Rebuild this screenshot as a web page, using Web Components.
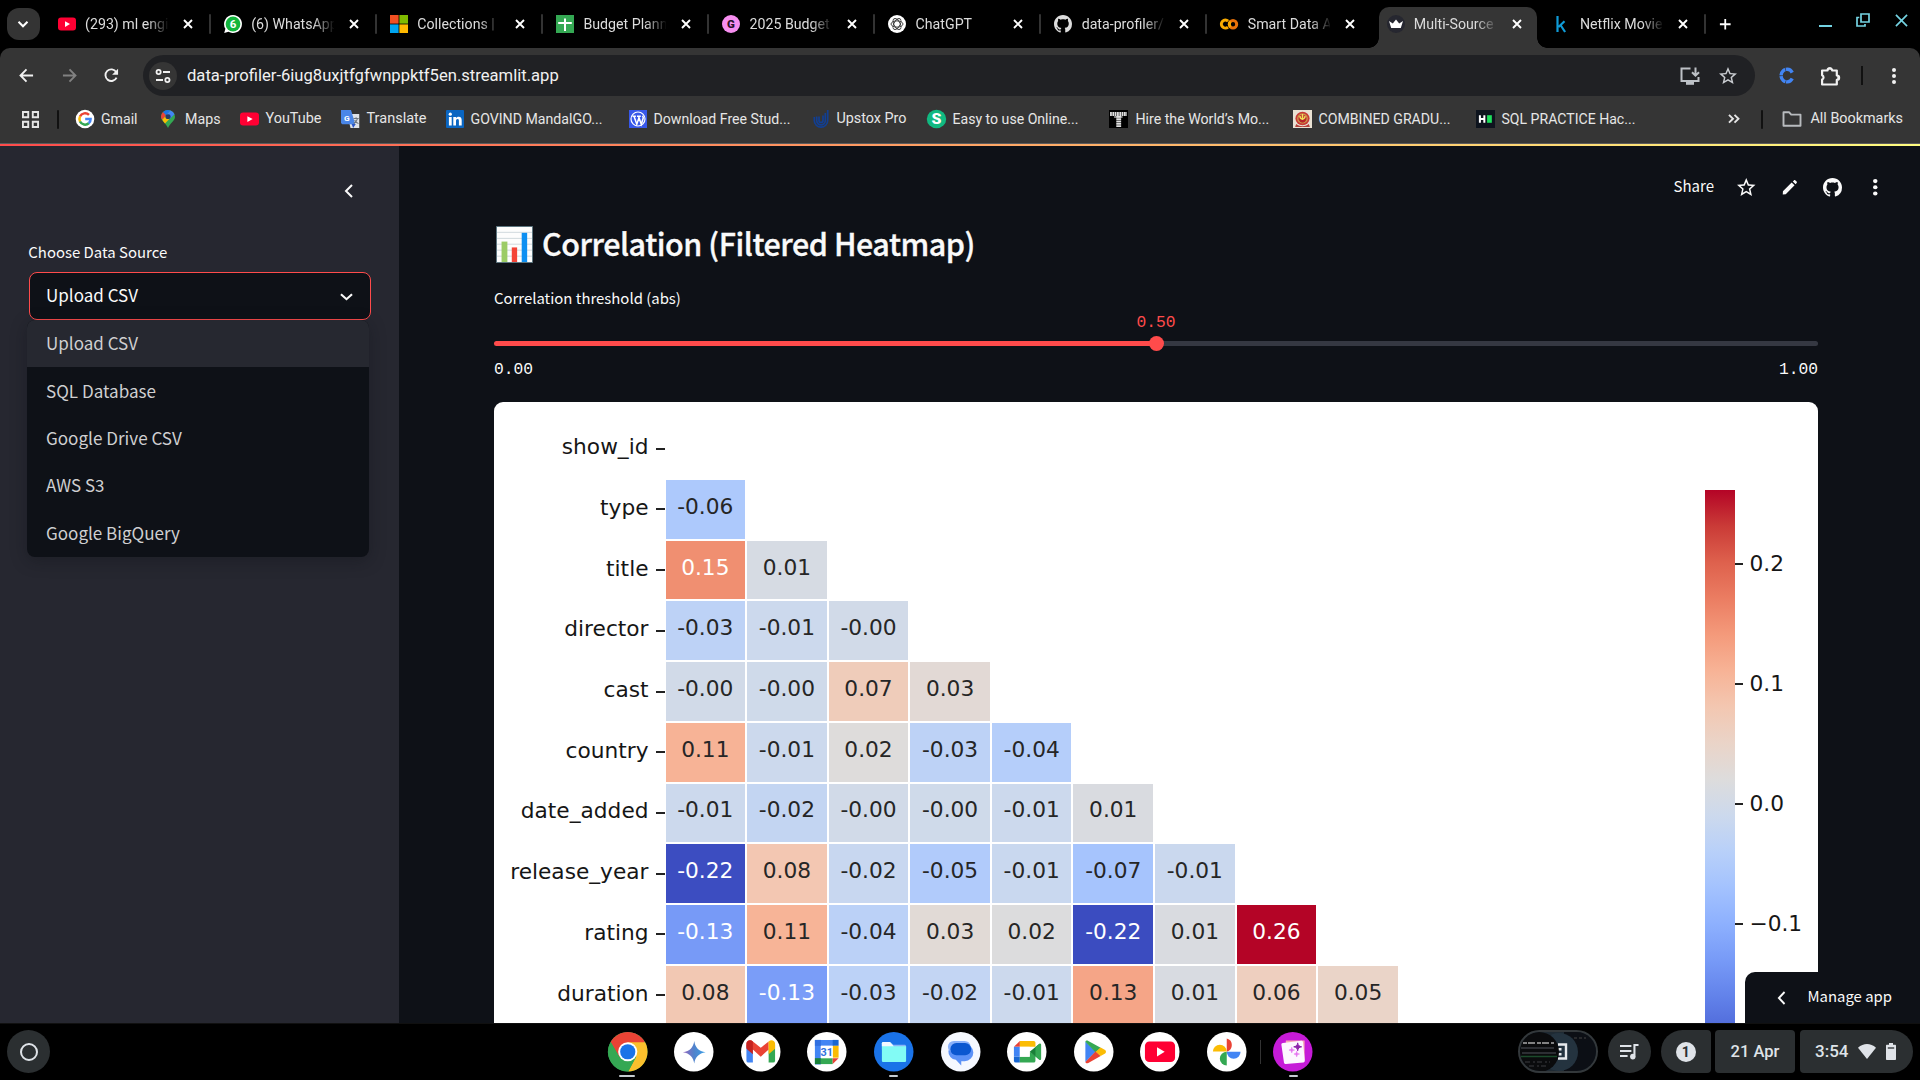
<!DOCTYPE html>
<html lang="en">
<head>
<meta charset="utf-8">
<title>Multi-Source Data Profiler</title>
<style>
html,body{margin:0;padding:0;background:#000;overflow:hidden}
body{width:1920px;height:1080px;font-family:Roboto,"Liberation Sans",sans-serif}
</style>
</head>
<body>
<desktop-screen></desktop-screen>
<script>
const SRC = '"Noto Sans CJK SC","Noto Sans",sans-serif';

/* Text that grows or shrinks its font so that it fills the width given in w. */
class FitText extends HTMLElement {
  connectedCallback() {
    if (!this.shadowRoot) {
      this.attachShadow({mode: 'open'}).innerHTML =
        '<style>:host{display:inline-block;white-space:nowrap;flex:none}</style><slot></slot>';
    }
    const w = parseFloat(this.getAttribute('w'));
    this.style.fontSize = '40px';
    const natural = this.getBoundingClientRect().width;
    if (natural > 0) this.style.fontSize = (40 * w / natural).toFixed(3) + 'px';
  }
}
customElements.define('fit-text', FitText);

const YT = '<rect x="0" y="2.6" width="18" height="13" rx="3" fill="#ff0033"/><path d="M7 6.2l5 2.9-5 2.9z" fill="#fff"/>';
const GH = '<path fill="currentColor" d="M8 0C3.58 0 0 3.58 0 8c0 3.54 2.29 6.53 5.47 7.59.4.07.55-.17.55-.38 0-.19-.01-.82-.01-1.49-2.01.37-2.53-.49-2.69-.94-.09-.23-.48-.94-.82-1.13-.28-.15-.68-.52-.01-.53.63-.01 1.08.58 1.23.82.72 1.21 1.87.87 2.33.66.07-.52.28-.87.51-1.07-1.78-.2-3.64-.89-3.64-3.95 0-.87.31-1.59.82-2.15-.08-.2-.36-1.02.08-2.12 0 0 .67-.21 2.2.82.64-.18 1.32-.27 2-.27s1.36.09 2 .27c1.53-1.04 2.2-.82 2.2-.82.44 1.1.16 1.92.08 2.12.51.56.82 1.27.82 2.15 0 3.07-1.87 3.75-3.65 3.95.29.25.54.73.54 1.48 0 1.07-.01 1.93-.01 2.2 0 .21.15.46.55.38A8.01 8.01 0 0016 8c0-4.42-3.58-8-8-8z"/>';
const T = (x, y, s, f, w, t) => `<text x="${x}" y="${y}" font-size="${s}" fill="${f}" font-weight="${w}" text-anchor="middle" font-family="Roboto,sans-serif">${t}</text>`;
const ICONS = {
  down: ['0 0 12 12', '<path d="M1.5 3.8L6 8.3l4.500-4.500" fill="none" stroke="currentColor" stroke-width="2"/>'],
  chevdown: ['0 0 12 8', '<path d="M.9 1.2L6 6.200l5.100-5" fill="none" stroke="currentColor" stroke-width="1.9"/>'],
  chevleft: ['0 0 9 14', '<path d="M8 1L2 7l6 6" fill="none" stroke="currentColor" stroke-width="2"/>'],
  close: ['0 0 10 10', '<path d="M1 1l8 8M9 1L1 9" stroke="currentColor" stroke-width="1.9"/>'],
  winclose: ['0 0 14 14', '<path d="M1 1l12 12M13 1L1 13" stroke="currentColor" stroke-width="1.8"/>'],
  restore: ['0 0 14 14', '<path d="M5 1h8v8H5z M3.300 4.500H1V13h8v-2" fill="none" stroke="currentColor" stroke-width="1.700"/>'],
  plus: ['0 0 14 14', '<path d="M7 1v12M1 7h12" stroke="currentColor" stroke-width="2"/>'],
  youtube: ['0 0 18 18', YT],
  whatsapp: ['0 0 18 18', '<path d="M9 0a9 9 0 1 1-4.500 16.800L.2 18l1.200-4.300A9 9 0 0 1 9 0z" fill="#fff"/><circle cx="9" cy="9" r="7.400" fill="#12b53c"/>' + T(9, 13, 11.5, '#fff', 700, '6')],
  microsoft: ['0 0 18 18', '<path fill="#f25022" d="M0 0h8.600v8.600H0z"/><path fill="#7fba00" d="M9.400 0H18v8.600H9.400z"/><path fill="#00a4ef" d="M0 9.400h8.600V18H0z"/><path fill="#ffb900" d="M9.400 9.400H18V18H9.400z"/>'],
  sheets: ['0 0 18 18', '<path fill="#34a853" d="M0 0h18v18H0z"/><path d="M9 3.500V16M2.200 8h13.600" stroke="#fff" stroke-width="2"/>'],
  gfavicon: ['0 0 18 18', '<circle cx="9" cy="9" r="9" fill="#f78ef0"/>' + T(9, 13, 11.5, '#2a102a', 900, 'G')],
  chatgpt: ['0 0 18 18', '<circle cx="9" cy="9" r="9" fill="#fff"/><g fill="none" stroke="#333" stroke-width=".9"><ellipse cx="9" cy="9" rx="6" ry="3.100"/><ellipse cx="9" cy="9" rx="6" ry="3.100" transform="rotate(60 9 9)"/><ellipse cx="9" cy="9" rx="6" ry="3.100" transform="rotate(120 9 9)"/></g>'],
  github: ['0 0 16 16', GH],
  colab: ['0 0 18 18', '<g fill="none" stroke-width="3"><path d="M8 12.100a4 4 0 1 1 .1-5.900" stroke="#f9ab00"/><circle cx="13" cy="9.200" r="3.700" stroke="#e8710a"/><path d="M10.500 12a3.700 3.700 0 0 1 0-5.500" stroke="#f9ab00"/></g>'],
  crown: ['0 0 18 18', '<circle cx="9" cy="9" r="9" fill="#262730"/><path fill="#fff" d="M2 6l3.800 2.400L9 4.600l3.200 3.800L16 6l-2.200 7H4.200z"/>'],
  kaggle: ['0 0 18 18', '<path d="M4.500 1v16M11.500 6.200L5.500 12M7.500 10l4.600 7" fill="none" stroke="#0f9bd7" stroke-width="2.200"/>'],
  back: ['0 0 16 16', '<path d="M15 8H2M8 1.500L1.600 8 8 14.500" fill="none" stroke="currentColor" stroke-width="2"/>'],
  fwd: ['0 0 16 16', '<path d="M1 8h13M8 1.500L14.400 8 8 14.500" fill="none" stroke="currentColor" stroke-width="2"/>'],
  reload: ['0 0 16 16', '<path d="M13.400 10.200A6.200 6.200 0 1 1 13 4.300" fill="none" stroke="currentColor" stroke-width="2"/><path d="M15 .8v6.400H8.600z" fill="currentColor"/>'],
  tune: ['0 0 16 16', '<g fill="none" stroke="currentColor" stroke-width="1.800"><circle cx="3.600" cy="4" r="2.100"/><path d="M8 4h7M1 12h7"/><circle cx="12.400" cy="12" r="2.100"/></g>'],
  install: ['0 0 20 18', '<path d="M10.500 1.500H1.500v12.500h17V10" fill="none" stroke="currentColor" stroke-width="2"/><path d="M6 15h8v2.800H6z" fill="currentColor"/><path d="M15.500 .5v7.500M12 5.200l3.500 3.500L19 5.200" fill="none" stroke="currentColor" stroke-width="2"/>'],
  star: ['2 2 20 19', '<path fill="currentColor" d="M22 9.240l-7.190-.62L12 2 9.190 8.630 2 9.240l5.460 4.730L5.820 21 12 17.270 18.180 21l-1.630-7.030L22 9.240zM12 15.400l-3.760 2.270 1-4.280-3.320-2.880 4.380-.38L12 6.100l1.710 4.040 4.380.38-3.320 2.880 1 4.280L12 15.400z"/>'],
  cext: ['0 0 16 16', '<path d="M13.400 5.300A5.600 5.900 0 1 0 13.400 10.900" fill="none" stroke="#4285f4" stroke-width="3.200" stroke-dasharray="7 .6"/>'],
  puzzle: ['0 0 20 20', '<path d="M2 4.500h5.200a2.200 2.200 0 0 1 4.400 0h4.400v5a2.200 2.200 0 0 1 0 4.400V18.500H2v-5a2.300 2.300 0 0 0 0-4.200z" fill="none" stroke="currentColor" stroke-width="2.100" stroke-linejoin="round"/><path d="M7 3.500a2.300 2.300 0 0 1 4.600 0zM16.500 9.500a2.200 2.200 0 0 1 0 4.400z" fill="currentColor"/>'],
  dots: ['0 0 4 16', '<g fill="currentColor"><circle cx="2" cy="2" r="2"/><circle cx="2" cy="8" r="2"/><circle cx="2" cy="14" r="2"/></g>'],
  apps: ['0 0 18 18', '<path d="M1 1h5.600v5.600H1zM11.400 1H17v5.600h-5.600zM1 11.400h5.600V17H1zM11.400 11.400H17V17h-5.600z" fill="none" stroke="currentColor" stroke-width="2"/>'],
  google: ['0 0 18 18', '<circle cx="9" cy="9" r="9.300" fill="#fff"/><g fill="none" stroke-width="2.500"><path d="M13 4.900A5.600 5.600 0 0 0 4 6.500" stroke="#ea4335"/><path d="M4.100 6.300a5.600 5.600 0 0 0 0 5.300" stroke="#fbbc04"/><path d="M4 11.500a5.600 5.600 0 0 0 8.800 1.700" stroke="#34a853"/><path d="M12.700 13.300A5.500 5.500 0 0 0 14.600 9H9.200" stroke="#4285f4"/></g>'],
  maps: ['0 0 14 19', '<path d="M7 0a7 7 0 0 1 7 7c0 4.300-4.800 6.500-7 12C4.800 13.500 0 11.300 0 7a7 7 0 0 1 7-7z" fill="#34a853"/><path d="M.2 5.800A7 7 0 0 1 2 2.200L5.500 5 1.300 10.300C.4 9 0 7.800 0 7z" fill="#ea4335"/><path d="M2 2.200A7 7 0 0 1 9.500.5L5 5.600z" fill="#1a73e8"/><path d="M9.500.5A7 7 0 0 1 13.500 4.400L8.800 9.500 5 5.500z" fill="#4285f4"/><path d="M1.300 10.300L5.300 5.500 8.800 9 4 14.300C3.200 13 2 11.600 1.300 10.300z" fill="#fbbc04"/><circle cx="7" cy="7" r="2.600" fill="#263c66"/>'],
  translate: ['0 0 18 18', '<path d="M6 4h11.300v14H9z" fill="#dfe3e8"/><path d="M0 0h9.500l4 14.200H1.200L0 13z" fill="#4a86e8"/><path d="M10 14l1.500 4 2.500-4z" fill="#2a56c6"/>' + T(5.6, 10.6, 8, '#fff', 700, 'G') + '<path d="M11.800 8.500h5M14.300 7.200v1.500M12 13.500c2-1 3.200-2.800 3.600-4.800M12.900 10c.8 1.600 2 2.800 3.700 3.600" fill="none" stroke="#6f7780" stroke-width="1"/>'],
  linkedin: ['0 0 18 18', '<rect width="18" height="18" rx="1" fill="#0a66c2"/><g fill="#fff"><circle cx="4.300" cy="4.200" r="1.600"/><path d="M2.900 7h2.800v8.400H2.900zM7.300 7H10v1.200c.5-.8 1.400-1.400 2.700-1.400 2.300 0 3 1.500 3 3.700v4.900h-2.800v-4.400c0-1.100-.2-1.900-1.300-1.900S10 10 10 11v4.400H7.300z"/></g>'],
  wordpress: ['0 0 18 18', '<path fill="#3858e9" d="M0 0h18v18H0z"/><circle cx="9" cy="9" r="7" fill="none" stroke="#fff" stroke-width="1.200"/><path d="M3.500 6.300h3.400M8 6.300h3.800M5 6.300l2.800 8 2-6M9.500 6.300l2.800 8 2-6.500-.8-2" fill="none" stroke="#fff" stroke-width="1.500"/>'],
  upstox: ['0 0 16 18', '<g fill="none" stroke="#123f92" stroke-width="1.700"><path d="M14.700 0v10.500a6.700 6.700 0 0 1-13.400 0V7"/><path d="M12.300 3v7.500a4.300 4.300 0 0 1-8.600 0V6.600"/><path d="M10 5.500v5a2 2 0 0 1-4 0V6.600"/></g>'],
  sgreen: ['0 0 18 18', '<circle cx="9" cy="9" r="9.200" fill="#11b981"/>' + T(9, 14.2, 15, '#fff', 900, 'S')],
  toptal: ['0 0 18 18', '<path fill="#000" d="M0 0h18v18H0z"/><path d="M1 4h16" stroke="#e0e0e0" stroke-width="4" stroke-dasharray="1.700 .5"/><path d="M5 7h8" stroke="#aaa" stroke-width="2" stroke-dasharray="1.400 .5"/><path d="M9.200 6v11" stroke="#e0e0e0" stroke-width="4.600" stroke-dasharray="1.800 .5"/>'],
  emblem: ['0 0 18 18', '<path fill="#e9e1d3" d="M0 0h18v18H0z"/><circle cx="9" cy="8.500" r="6.700" fill="#c83a35"/><circle cx="9" cy="8.500" r="4.500" fill="none" stroke="#c9a74e" stroke-width="1"/><circle cx="9" cy="9.500" r="3" fill="#b52429"/><path d="M9 4v6M6.600 6c0 4 4.800 4 4.800 0" fill="none" stroke="#f2e05a" stroke-width="1.300"/><path d="M3 14c4 3 8 3 12 0l1 3H2z" fill="#b3413a"/>'],
  hacker: ['0 0 18 18', '<path fill="#0e141e" d="M0 0h18v18H0z"/><path d="M3.700 5.200v7.600M7.900 5.200v7.600M4 9h4" stroke="#fff" stroke-width="1.900"/><path fill="#1ee05c" d="M10.500 5.200H15v7.600h-4.500z"/>'],
  more: ['0 0 12 10', '<path d="M1 1l4 4-4 4M6.500 1l4 4-4 4" fill="none" stroke="currentColor" stroke-width="1.900"/>'],
  folder: ['0 0 20 16', '<path d="M1.500 1.300h5.700l2 2.300h9.300v11.200h-17z" fill="none" stroke="currentColor" stroke-width="1.900" stroke-linejoin="round"/>'],
  pencil: ['0 0 16 16', '<path d="M10.300 2.600l3.100 3.100L4 15.100 .8 15.400l.2-3.300zM11.500 1.500l1.200-1.100c.5-.5 1.100-.5 1.600 0l1.300 1.300c.5.5.5 1.100 0 1.600l-1.100 1.200z" fill="currentColor"/>'],
  barchart: ['0 0 38 38', '<path fill="#fdfdfd" stroke="#5c7580" stroke-width="1" d="M.5.500h37v37H.500z"/><path d="M1 6.500h36M1 12.700h36M1 18.700h36M1 24.800h36M1 31h36" stroke="#cfd8dc" stroke-width="1"/><path fill="#9ccc65" d="M5.700 16h6v21h-6z"/><path fill="#f44336" d="M16.200 22h5.500v15h-5.500z"/><path fill="#0d8ff2" d="M26.400 7h5.600v30h-5.600z"/>'],
  chrome: ['0 0 40 40', '<circle cx="20" cy="20" r="20" fill="#34a853"/><path d="M20 20L2.700 10A20 20 0 0 1 37.300 10z" fill="#ea4335"/><path d="M20 10.500h17.600A20 20 0 0 1 20.500 40l8-15z" fill="#fbc02d"/><path d="M2.700 10l9 15.500L20 10.500z" fill="#ea4335"/><path d="M2.700 10l8.800 15 8.500 4.500L20.500 40A20 20 0 0 1 2.700 10z" fill="#34a853"/><path d="M20.500 40l8-15-8.500 4.500z" fill="#34a853"/><circle cx="20" cy="20" r="9.700" fill="#fff"/><circle cx="20" cy="20" r="7.700" fill="#1a73e8"/>'],
  gemini: ['0 0 40 40', '<defs><linearGradient id="g"><stop offset="0" stop-color="#9667bd"/><stop offset=".5" stop-color="#4f83cc"/><stop offset="1" stop-color="#3aa0e8"/></linearGradient></defs><circle cx="20" cy="20" r="20" fill="#fff"/><path d="M20.500 9c.9 6.500 4.500 10.300 11.500 11.500-7 1.200-10.600 5-11.500 11.500C19.600 25.500 16 21.700 9 20.500 16 19.300 19.600 15.500 20.500 9z" fill="url(#g)"/>'],
  gmail: ['0 0 40 40', '<circle cx="20" cy="20" r="20" fill="#fff"/><path d="M5.500 13v16a2 2 0 0 0 2 2H12V17z" fill="#4285f4"/><path d="M34.500 13v16a2 2 0 0 1-2 2H28V17z" fill="#34a853"/><path d="M5.500 16v-4c0-3.500 4-4.500 6.500-2.500L20 16l8-6.500v8.300L20 25l-8-7.200z" fill="#ea4335"/><path d="M5.500 17v-5c0-3.500 4-4.500 6.500-2.500v13z" fill="#c5221f"/><path d="M28 9.500c2.500-2 6.500-1 6.500 2.500v5L28 22.500z" fill="#fbbc04"/>'],
  calendar: ['0 0 40 40', '<circle cx="20" cy="20" r="20" fill="#fff"/><path d="M8 8h19v6H14v19H8z" fill="#4285f4"/><path d="M8 8h6v6H8z" fill="#3070e0"/><path d="M26 8h6v6h-6z" fill="#1967d2"/><path d="M26 14h6v12h-6z" fill="#fbbc04"/><path d="M14 26.500h12v6H14z" fill="#34a853"/><path d="M8 26.500h6v6H8z" fill="#188038"/><path d="M26 26.500h6l-6 6z" fill="#ea4335"/><path fill="#fff" d="M14 14h12v12.500H14z"/>' + T(20, 24.2, 11, '#2f73e0', 700, '31')],
  files: ['0 0 40 40', '<circle cx="20" cy="20" r="20" fill="#1a73e8"/><path d="M8 11.500c0-.8.600-1.500 1.500-1.500h7l3 3H31c.800 0 1.500.6 1.500 1.500V18H8z" fill="#8ab4f8"/><path d="M8 11.500c0-.8.600-1.500 1.500-1.500h6.500l4 4.500H32.500v14.500c0 .8-.6 1.500-1.500 1.500H9.500c-.9 0-1.500-.7-1.500-1.500z" fill="#82fbf5"/><path d="M8 11.500c0-.8.600-1.500 1.500-1.500h6.500l4 4.500H8z" fill="#f2f8ff"/>'],
  messages: ['0 0 40 40', '<circle cx="20" cy="20" r="20" fill="#f5f8ff"/><path d="M16 12h8a8.700 8.700 0 0 1 0 17.500h-3.500V34L15 28a8 8 0 0 1 1-16z" fill="#5d92f7"/><rect x="7" y="9" width="23" height="12" rx="6" fill="#8ab1fa"/><rect x="9.500" y="11.200" width="21" height="12.300" rx="6.100" fill="#0b57d0"/>'],
  meet: ['0 0 40 40', '<circle cx="20" cy="20" r="20" fill="#fff"/><path d="M13 9h14c1 0 1.800.8 1.800 1.800V15H13z" fill="#fbbc04"/><path d="M7 15l6-6v6z" fill="#ea4335"/><path d="M7 15h6v10H7z" fill="#4285f4"/><path d="M7 25h6v6H9a2 2 0 0 1-2-2z" fill="#1967d2"/><path d="M13 25h10v-5l5.800 4v5a2 2 0 0 1-1.800 2H13z" fill="#34a853"/><path d="M23 20l9.500-7.800c.9-.7 2-.3 2 .8v14c0 1.100-1.100 1.500-2 .8z" fill="#188038"/><path d="M28.800 15.500l3.700-3.300c.9-.7 2-.3 2 .8v14c0 1.100-1.100 1.500-2 .8l-3.700-3.500z" fill="#34a853"/><path fill="#fff" d="M13 15h10v10H13z"/>'],
  play: ['0 0 40 40', '<circle cx="20" cy="20" r="20" fill="#fff"/><path d="M11.500 9.500v21L22 20z" fill="#4285f4"/><path d="M11.500 9.800c.5-1.500 1.700-1.500 3-.8l12.500 7L22 20.800z" fill="#34a853"/><path d="M11.500 30.500c.5 1.500 1.700 1.500 3 .8l12.500-7-5-4.800z" fill="#ea4335"/><path d="M27 15.600l4.500 2.700c1.200.7 1.200 2.700 0 3.400L27 24.400l-5-4.400z" fill="#fbbc04"/>'],
  ytapp: ['0 0 40 40', '<circle cx="20" cy="20" r="20" fill="#fff"/><rect x="5" y="9.500" width="30.500" height="21" rx="4.500" fill="#ff0033"/><path d="M17.200 15.500l7.800 4.600-7.800 4.600z" fill="#fff"/>'],
  photos: ['0 0 40 40', '<circle cx="20" cy="20" r="20" fill="#fff"/><path d="M20 20V6.500a7 7 0 0 1 0 13.500z" fill="#ea4335"/><path d="M20 20h14a7 7 0 0 1-14 0z" fill="#4285f4"/><path d="M20 20v14a7 7 0 0 1 0-14z" fill="#34a853"/><path d="M20 19.800H6a7 7 0 0 1 14 0z" fill="#fbbc04"/>'],
  canvas: ['0 0 40 40', '<circle cx="20" cy="20" r="20" fill="#c61bd8"/><path d="M13 8.500h19v20L13 30z" fill="#f8a9b5"/><path d="M8.500 13c-.1-1 .5-1.700 1.500-1.800l18.500-2.300c1-.1 1.800.5 1.900 1.500l1.800 18.500c.1 1-.5 1.800-1.500 1.900L13 32.400c-1 .1-1.800-.5-1.900-1.500z" fill="#fdf7ff"/><path d="M25 11c.4 2.600 1.400 3.600 4 4-2.600.4-3.600 1.400-4 4-.4-2.600-1.400-3.600-4-4 2.600-.4 3.600-1.400 4-4z" fill="#8e24aa" stroke="#8e24aa"/><path d="M19 15.500c.2 1.800 1 2.500 2.800 2.800-1.800.3-2.600 1-2.800 2.800-.3-1.800-1-2.500-2.800-2.800 1.800-.3 2.500-1 2.800-2.800zM24 19.500c.2 1.800 1 2.500 2.800 2.800-1.800.3-2.600 1-2.800 2.800-.3-1.800-1-2.500-2.800-2.800 1.800-.3 2.500-1 2.800-2.800z" fill="#e572f0" stroke="#e572f0" stroke-width=".6"/>'],
  queue: ['0 0 20 16', '<path d="M0 2h12M0 7h12M0 12h8" stroke="currentColor" stroke-width="1.900"/><path d="M19.500 1h-4.300v10.500" fill="none" stroke="currentColor" stroke-width="2.200"/><circle cx="13.500" cy="12.600" r="2.900" fill="currentColor"/>'],
  one: ['0 0 20 20', '<circle cx="10" cy="10" r="10" fill="#dfe3e8"/>' + T(9.8, 15, 14, '#2b2f31', 700, '1')],
  wifi: ['0 0 18 15', '<path d="M0 3.700C5.500-1.200 12.500-1.200 18 3.700L9 15z" fill="currentColor"/>'],
  battery: ['0 0 10 17', '<path d="M3 0h4v1.700h2c.6 0 1 .4 1 1V16c0 .6-.4 1-1 1H1c-.6 0-1-.4-1-1V2.700c0-.6.400-1 1-1h2z" fill="currentColor"/><path d="M1.800 5h6.400" stroke="#2b2f31" stroke-width="1.300"/>'],
  launcher: ['0 0 18 18', '<circle cx="9" cy="9" r="8" fill="none" stroke="currentColor" stroke-width="2"/>']
};
class UiIcon extends HTMLElement {
  connectedCallback() {
    if (this.shadowRoot) return;
    const [vb, body] = ICONS[this.getAttribute('name')];
    const w = this.getAttribute('w') || 18, h = this.getAttribute('h') || w;
    this.attachShadow({mode: 'open'}).innerHTML =
      `<style>:host{display:block;flex:none;width:${w}px;height:${h}px}svg{display:block;overflow:visible}</style>
       <svg width="${w}" height="${h}" viewBox="${vb}" preserveAspectRatio="none">${body}</svg>`;
  }
}
customElements.define('ui-icon', UiIcon);

function element(name, html) {
  const t = document.createElement('template');
  if (typeof html === 'string') t.innerHTML = html;
  customElements.define(name, class extends HTMLElement {
    connectedCallback() {
      if (this.shadowRoot) return;
      const root = this.attachShadow({mode: 'open'});
      if (typeof html === 'string') root.appendChild(t.content.cloneNode(true));
      else root.innerHTML = html(this);
    }
  });
}

/* ---------- browser chrome ---------- */
element('browser-tab', el => `<style>
:host{display:flex;align-items:center;box-sizing:border-box;width:166.1px;height:48px;padding-left:13px;flex:none;color:#dcdcdc;font:14.2px/20px Roboto,sans-serif;position:relative}
:host([active]) .bg{position:absolute;left:5px;right:3px;top:7px;bottom:0;background:#353535;border-radius:10px 10px 0 0}
:host([active]) .bg::before,:host([active]) .bg::after{content:"";position:absolute;bottom:0;width:10px;height:10px}
.bg::before{left:-10px;background:radial-gradient(circle at 0 0,transparent 9.500px,#353535 10px)}
.bg::after{right:-10px;background:radial-gradient(circle at 100% 0,transparent 9.500px,#353535 10px)}
ui-icon,.t,.s{position:relative}
.t{margin-left:9.300px;width:82.700px;overflow:hidden;white-space:nowrap;-webkit-mask-image:linear-gradient(90deg,#000 62px,transparent 84px);flex:none}
.x{margin-left:15px;color:#fff}
.s{margin-left:auto;width:2px;height:20px;background:#333;border-radius:1px}
:host([nosep]) .s{visibility:hidden}
</style><div class="bg"></div><ui-icon name="${el.getAttribute('icon')}"></ui-icon><span class="t"><slot></slot></span><ui-icon class="x" name="close" w="10"></ui-icon><span class="s"></span>`);

element('tab-strip', `<style>
:host{display:flex;height:48px;background:#000;align-items:center;color:#fff}
.search{width:33px;height:32px;margin:0 5.300px 0 6.500px;border-radius:12px;background:#343434;display:grid;place-items:center;flex:none;padding:0}
.plus{margin-left:13px}
.win{margin-left:auto;display:flex;align-items:center;color:#74d3e2;margin-right:12px;margin-bottom:8px}
.min{width:13px;height:2px;background:#74d3e2;margin:11px 24px 0 0}
</style>
<div class="search"><ui-icon name="down" w="12"></ui-icon></div>
<browser-tab icon="youtube">(293) ml engi</browser-tab>
<browser-tab icon="whatsapp">(6) WhatsApp</browser-tab>
<browser-tab icon="microsoft">Collections |</browser-tab>
<browser-tab icon="sheets">Budget Plann</browser-tab>
<browser-tab icon="gfavicon">2025 Budget</browser-tab>
<browser-tab icon="chatgpt">ChatGPT</browser-tab>
<browser-tab icon="github">data-profiler/</browser-tab>
<browser-tab icon="colab" nosep>Smart Data A</browser-tab>
<browser-tab icon="crown" active nosep>Multi-Source</browser-tab>
<browser-tab icon="kaggle">Netflix Movie</browser-tab>
<ui-icon class="plus" name="plus" w="12.500"></ui-icon>
<div class="win"><div class="min"></div><ui-icon name="restore" w="14"></ui-icon><ui-icon name="winclose" w="13" style="margin-left:25px"></ui-icon></div>`);

element('address-bar', `<style>
:host{display:flex;align-items:center;height:55px;padding-left:19px;color:#f1f1f1;box-sizing:border-box}
.box{margin-left:24px;width:1612px;height:41px;border-radius:21px;background:#202124;display:flex;align-items:center;box-sizing:border-box;padding:0 18px 0 6px;flex:none}
.chip{width:28px;height:28px;border-radius:50%;background:#353535;display:grid;place-items:center;margin-right:10px}
.sp{flex:1}.sep{width:2px;height:19px;background:#111;margin:0 29px 0 20px}
</style>
<ui-icon name="back" w="15"></ui-icon>
<ui-icon name="fwd" w="15" style="color:#818181;margin-left:28px"></ui-icon>
<ui-icon name="reload" w="15" style="margin-left:27px"></ui-icon>
<div class="box"><div class="chip"><ui-icon name="tune" w="16"></ui-icon></div><fit-text w="372">data-profiler-6iug8uxjtfgfwnppktf5en.streamlit.app</fit-text><div class="sp"></div>
<ui-icon name="install" w="20" h="18" style="color:#bdc1c6"></ui-icon><ui-icon name="star" w="18" h="17" style="color:#c9ccd0;margin-left:19px"></ui-icon></div>
<ui-icon name="cext" w="17" style="margin-left:23px"></ui-icon><ui-icon name="puzzle" w="21" h="20" style="margin-left:25px"></ui-icon>
<div class="sep"></div><ui-icon name="dots" w="4" h="16"></ui-icon>`);

element('book-mark', el => `<style>
:host{display:flex;align-items:center;flex:none;width:${el.getAttribute('span')}px;color:#e6e6e6}
fit-text{margin-left:${el.getAttribute('gap') || 7}px;line-height:20px}
</style><ui-icon name="${el.getAttribute('icon')}" w="${el.getAttribute('iw') || 18}" h="18"></ui-icon><fit-text w="${el.getAttribute('tw')}">${el.textContent}</fit-text>`);

element('bookmark-bar', `<style>
:host{display:flex;align-items:center;height:40px;padding-bottom:4px;box-sizing:border-box;margin-top:-2px;padding-left:22px;color:#e6e6e6;line-height:20px}
.sep{width:2px;height:19px;background:#111;border-radius:1px}
</style>
<ui-icon name="apps" w="17" h="17"></ui-icon><div class="sep" style="margin:0 17px 0 18px"></div>
<book-mark icon="google" span="85" tw="36.500">Gmail</book-mark>
<book-mark icon="maps" iw="14" gap="10" span="78.500" tw="35.500">Maps</book-mark>
<book-mark icon="youtube" iw="19" span="101" tw="56">YouTube</book-mark>
<book-mark icon="translate" iw="19" span="105" tw="60">Translate</book-mark>
<book-mark icon="linkedin" span="183" tw="132">GOVIND MandalGO...</book-mark>
<book-mark icon="wordpress" span="184" tw="137">Download Free Stud...</book-mark>
<book-mark icon="upstox" iw="16" gap="8" span="114" tw="70">Upstox Pro</book-mark>
<book-mark icon="sgreen" iw="19" span="182" tw="126">Easy to use Online...</book-mark>
<book-mark icon="toptal" iw="19" gap="8" span="184" tw="134">Hire the World’s Mo...</book-mark>
<book-mark icon="emblem" iw="19" span="183" tw="132">COMBINED GRADU...</book-mark>
<book-mark icon="hacker" iw="19" span="252" tw="134">SQL PRACTICE Hac...</book-mark>
<ui-icon name="more" w="12" h="9.500"></ui-icon><div class="sep" style="margin:0 19px 0 21px"></div>
<ui-icon name="folder" w="20" h="16" style="color:#b8bbbe;margin-right:9px"></ui-icon><fit-text w="92.500">All Bookmarks</fit-text>`);

element('browser-chrome', `<style>
:host{display:block;background:#000;flex:none}
.bar{background:#353535;border-radius:10px 10px 0 0;height:96px;box-sizing:border-box;border-bottom:1px solid #5a5a5c}
</style><tab-strip></tab-strip><div class="bar"><address-bar></address-bar><bookmark-bar></bookmark-bar></div>`);

/* ---------- sidebar ---------- */
element('select-option', `<style>
:host{display:flex;align-items:center;height:47.400px;box-sizing:border-box;padding:0 19px 1px;color:#cfcfd1}
:host([selected]){background:#262830}
</style><slot></slot>`);
element('data-source-select', `<style>
:host{display:block;position:relative;font-family:${SRC};line-height:24px}
.box{height:48px;width:342px;box-sizing:border-box;border:1px solid #ff4b4b;border-radius:8px;background:#0e1117;display:flex;align-items:center;justify-content:space-between;padding:0 17px 2px 16px;color:#fafafa}
.menu{position:absolute;left:-2px;top:48px;width:342px;background:#0e1117;border-radius:8px;overflow:hidden;box-shadow:0 4px 16px rgba(14,17,23,.35)}
</style>
<div class="box"><fit-text w="92">Upload CSV</fit-text><ui-icon name="chevdown" w="13" h="8" style="margin-top:3px"></ui-icon></div>
<div class="menu">
<select-option selected><fit-text w="92">Upload CSV</fit-text></select-option>
<select-option><fit-text w="110">SQL Database</fit-text></select-option>
<select-option><fit-text w="136">Google Drive CSV</fit-text></select-option>
<select-option><fit-text w="58.500">AWS S3</fit-text></select-option>
<select-option><fit-text w="134">Google BigQuery</fit-text></select-option>
</div>`);
element('app-sidebar', `<style>
:host{display:block;width:399px;height:877px;background:#262730;box-sizing:border-box;padding:38px 28px 0 29px;color:#fafafa;flex:none}
.top{display:flex;justify-content:flex-end;height:50px;padding-right:18px}
.label{font-family:${SRC};line-height:24px;height:33px;padding-top:5px;margin-left:-.7px}
</style><div class="top"><ui-icon name="chevleft" w="9" h="14"></ui-icon></div><div class="label"><fit-text w="139">Choose Data Source</fit-text></div><data-source-select></data-source-select>`);

/* ---------- main content ---------- */
element('app-toolbar', `<style>
:host{display:flex;align-items:center;justify-content:flex-end;height:40px;padding:21px 43px 0 0;color:#fafafa;font-family:${SRC};line-height:24px}
</style><fit-text w="40.500" style="margin:-2px 23px 0 0">Share</fit-text>
<ui-icon name="star" w="18.500" h="18"></ui-icon><ui-icon name="pencil" w="15" style="margin-left:26px"></ui-icon>
<ui-icon name="github" w="19" style="margin-left:26px"></ui-icon><ui-icon name="dots" w="4.500" h="16.500" style="margin-left:31px"></ui-icon>`);
element('threshold-slider', `<style>
:host{display:block;font-family:"Liberation Mono",monospace;font-size:16.300px;line-height:20px;color:#fafafa}
.label{font-family:${SRC};line-height:24px;height:28.500px}
.val{color:#ff4b4b;width:1324px;text-align:center}
.track{height:5px;border-radius:3px;background:linear-gradient(90deg,#ff4b4b 50%,#353842 50%);display:flex;justify-content:center;align-items:center;margin-top:8px}
.thumb{width:15px;height:15px;border-radius:50%;background:#ff4b4b;flex:none}
.ends{display:flex;justify-content:space-between;margin-top:14px}
</style><div class="label"><fit-text w="187">Correlation threshold (abs)</fit-text></div><div class="val">0.50</div><div class="track"><div class="thumb"></div></div><div class="ends"><span>0.00</span><span>1.00</span></div>`);

const STOPS = ['3b4cc0','4e68d8','6282ea','779af7','8db0fe','a3c2fe','b8d0f9','ccd9ed','dddcdc','ead4c8','f3c7b1','f7b396','f49a7b','eb7d62','de614d','ca3b37','b40426'];
const VMIN = -0.221, VMAX = 0.262;
function coolwarm(v) {
  const t = Math.max(0, Math.min(1, (v - VMIN) / (VMAX - VMIN))) * 16, i = Math.min(15, Math.floor(t)), f = t - i;
  const ch = (s, k) => parseInt(s.substr(k * 2, 2), 16);
  return 'rgb(' + [0, 1, 2].map(k => Math.round(ch(STOPS[i], k) * (1 - f) + ch(STOPS[i + 1], k) * f)).join(',') + ')';
}
const ROWS = [
  ['show_id', []],
  ['type', [-.056]],
  ['title', [.153, .008]],
  ['director', [-.033, -.009, -.001]],
  ['cast', [-.001, -.004, .069, .031]],
  ['country', [.111, -.010, .022, -.032, -.044]],
  ['date_added', [-.009, -.023, -.001, -.004, -.009, .013]],
  ['release_year', [-.22, .08, -.016, -.0505, -.014, -.066, -.012]],
  ['rating', [-.13, .11, -.036, .029, .019, -.222, .013, .262]],
  ['duration', [.078, -.127, -.034, -.024, -.009, .128, .012, .063, .051]]
];
element('heat-row', el => {
  const [name, vals] = ROWS[+el.getAttribute('index')];
  return `<style>
:host{display:flex;height:60.720px;align-items:stretch;font:22px/24px "DejaVu Sans",sans-serif;color:#161616}
.name{width:154.500px;text-align:right;align-self:center;font-size:21.700px;white-space:nowrap;flex:none;padding-bottom:3px}
.tick{width:9px;height:2px;background:#222;align-self:center;margin:0 0 0 7px;flex:none}
.c{width:79.600px;margin:1px;display:flex;align-items:center;justify-content:center;color:#262626;font-size:21.700px;box-sizing:border-box;padding-bottom:5px}
.w{color:#fff}
</style><span class="name">${name}</span><span class="tick"></span>` + vals.map(v => {
    const light = v > .14 || v < -.1;
    return `<span class="c${light ? ' w' : ''}" style="background:${coolwarm(v)}">${v.toFixed(2)}</span>`;
  }).join('');
});
element('color-bar', `<style>
:host{display:flex;width:113px;margin-top:88px;font:21.700px/24px "DejaVu Sans",sans-serif;color:#161616}
.bar{width:29.500px;height:579px;background:linear-gradient(0deg,${STOPS.map(s => '#' + s).join(',')})}
.axis{padding-top:14.300px}
.t{height:120px;display:flex;align-items:center}
.t::before{content:"";width:8px;height:2px;background:#222;margin-right:7px}
</style><div class="bar"></div><div class="axis"><div class="t">0.2</div><div class="t">0.1</div><div class="t">0.0</div><div class="t">−0.1</div></div>`);
element('heat-map', () => `<style>
:host{display:flex;justify-content:space-between;width:1324px;height:760px;background:#fff;border-radius:9px;box-sizing:border-box}
.rows{padding-top:16.300px}
</style><div class="rows">${ROWS.map((r, i) => `<heat-row index="${i}"></heat-row>`).join('')}</div><color-bar></color-bar>`);

element('app-main', `<style>
:host{display:block;flex:1;background:#0e1117;height:877px;overflow:hidden;position:relative;color:#fafafa}
.col{padding-left:95px;width:1324px}
h2{margin:0;font:500 30px/48px ${SRC};display:flex;align-items:center;height:72px;padding:0 0 7px 2px;box-sizing:border-box;margin-top:5px}
h2 fit-text{letter-spacing:-.015em;-webkit-text-stroke:.35px #fafafa;margin:-3px 0 0 9px}
threshold-slider{margin-top:.5px;height:117.500px}
.manage{position:absolute;right:0;bottom:0;width:175px;height:51px;background:#0e1117;border-top-left-radius:10px;display:flex;align-items:center;padding-left:32px;box-sizing:border-box;font-family:${SRC};line-height:24px}
</style>
<app-toolbar></app-toolbar>
<div class="col"><h2><ui-icon name="barchart" w="37"></ui-icon><fit-text w="433">Correlation (Filtered Heatmap)</fit-text></h2>
<threshold-slider></threshold-slider><heat-map></heat-map></div>
<div class="manage"><ui-icon name="chevleft" w="8.500" h="14"></ui-icon><fit-text w="84.500" style="margin:-3px 0 0 22px">Manage app</fit-text></div>`);

/* ---------- shelf ---------- */
element('shelf-app', el => `<style>
:host{display:flex;flex-direction:column;align-items:center;width:66.600px;flex:none;padding-top:7.500px}
i{display:block;height:2px;width:${el.getAttribute('mark') || 0}px;background:#c5cbd0;border-radius:1px;margin-top:4px}
</style><ui-icon name="${el.getAttribute('icon')}" w="39.500"></ui-icon><i></i>`);
element('desk-preview', `<style>
:host{display:flex;width:80px;height:43px;box-sizing:border-box;border-radius:22px;border:2px solid #33383b;overflow:hidden;background:#1f2a33}
svg{display:block}
</style><svg width="76" height="39" viewBox="0 0 76 39"><rect x="44" width="36" height="39" fill="#0c0f15"/><circle cx="39" cy="20" r="19" fill="#24333f"/><path d="M38 12.500h8v14h-8" fill="none" stroke="#e8eaed" stroke-width="2.400"/><path d="M38 16h3.500v2.500H38zM38 21h3.500v2.500H38z" fill="#e8eaed"/><circle cx="19" cy="20" r="20" fill="#0a0b0d"/><path d="M3 11h31" stroke="#aaa" stroke-width="1.500" stroke-dasharray="4 1 7 2"/><path d="M1 16h33M2 21h34" stroke="#2c2e33" stroke-width="2"/><path d="M1 24.500h36" stroke="#1b4a2b" stroke-width="1.500"/><path d="M5 30h25M9 34h20" stroke="#3a3d41" stroke-width="1.200" stroke-dasharray="5 3 2 2"/><path d="M54 6h12" stroke="#444" stroke-dasharray="3 2"/></svg>`);
element('system-shelf', `<style>
:host{display:flex;height:57px;background:#000;align-items:flex-start;box-sizing:border-box;border-top:1px solid #101010;font:500 16px/43px Roboto,sans-serif;color:#dfe3e8}
.home{width:43px;height:43px;border-radius:50%;background:#2b2f31;display:grid;place-items:center;margin:6px 0 0 7px;flex:none}
.apps{display:flex;margin-left:544px}
.sep{width:1px;height:24px;background:#333;margin:16px -1px 0 0}
.st{display:flex;margin:6px 7px 0 auto}
.p{height:43px;background:#2b2f31;display:flex;align-items:center;justify-content:center;box-sizing:border-box}
</style>
<div class="home"><ui-icon name="launcher" w="18"></ui-icon></div>
<div class="apps"><shelf-app icon="chrome" mark="16"></shelf-app><shelf-app icon="gemini"></shelf-app><shelf-app icon="gmail"></shelf-app><shelf-app icon="calendar"></shelf-app><shelf-app icon="files" mark="9"></shelf-app><shelf-app icon="messages"></shelf-app><shelf-app icon="meet"></shelf-app><shelf-app icon="play"></shelf-app><shelf-app icon="ytapp"></shelf-app><shelf-app icon="photos"></shelf-app><div class="sep"></div><shelf-app icon="canvas" mark="9"></shelf-app></div>
<div class="st"><desk-preview></desk-preview>
<div class="p" style="width:43px;border-radius:50%;margin-left:10px"><ui-icon name="queue" w="19" h="16"></ui-icon></div>
<div class="p" style="width:50px;border-radius:22px 4px 4px 22px;margin-left:10px"><ui-icon name="one" w="20"></ui-icon></div>
<div class="p" style="width:80px;border-radius:4px;margin-left:4px"><fit-text w="49">21 Apr</fit-text></div>
<div class="p" style="width:113px;border-radius:4px 22px 22px 4px;margin-left:5px;justify-content:flex-start;padding-left:15px"><fit-text w="33.500">3:54</fit-text><ui-icon name="wifi" w="18" h="15" style="margin-left:10px"></ui-icon><ui-icon name="battery" w="10" h="17" style="margin-left:10px"></ui-icon></div>
</div>`);

element('desktop-screen', `<style>
:host{display:flex;flex-direction:column;width:1920px;height:1080px;overflow:hidden;background:#000}
.line{height:2px;background:linear-gradient(90deg,#ff4b4b,#fffd80);flex:none}
.page{display:flex;height:877px;flex:none}
</style><browser-chrome></browser-chrome><div class="line"></div><div class="page"><app-sidebar></app-sidebar><app-main></app-main></div><system-shelf></system-shelf>`);
</script>
</body>
</html>
